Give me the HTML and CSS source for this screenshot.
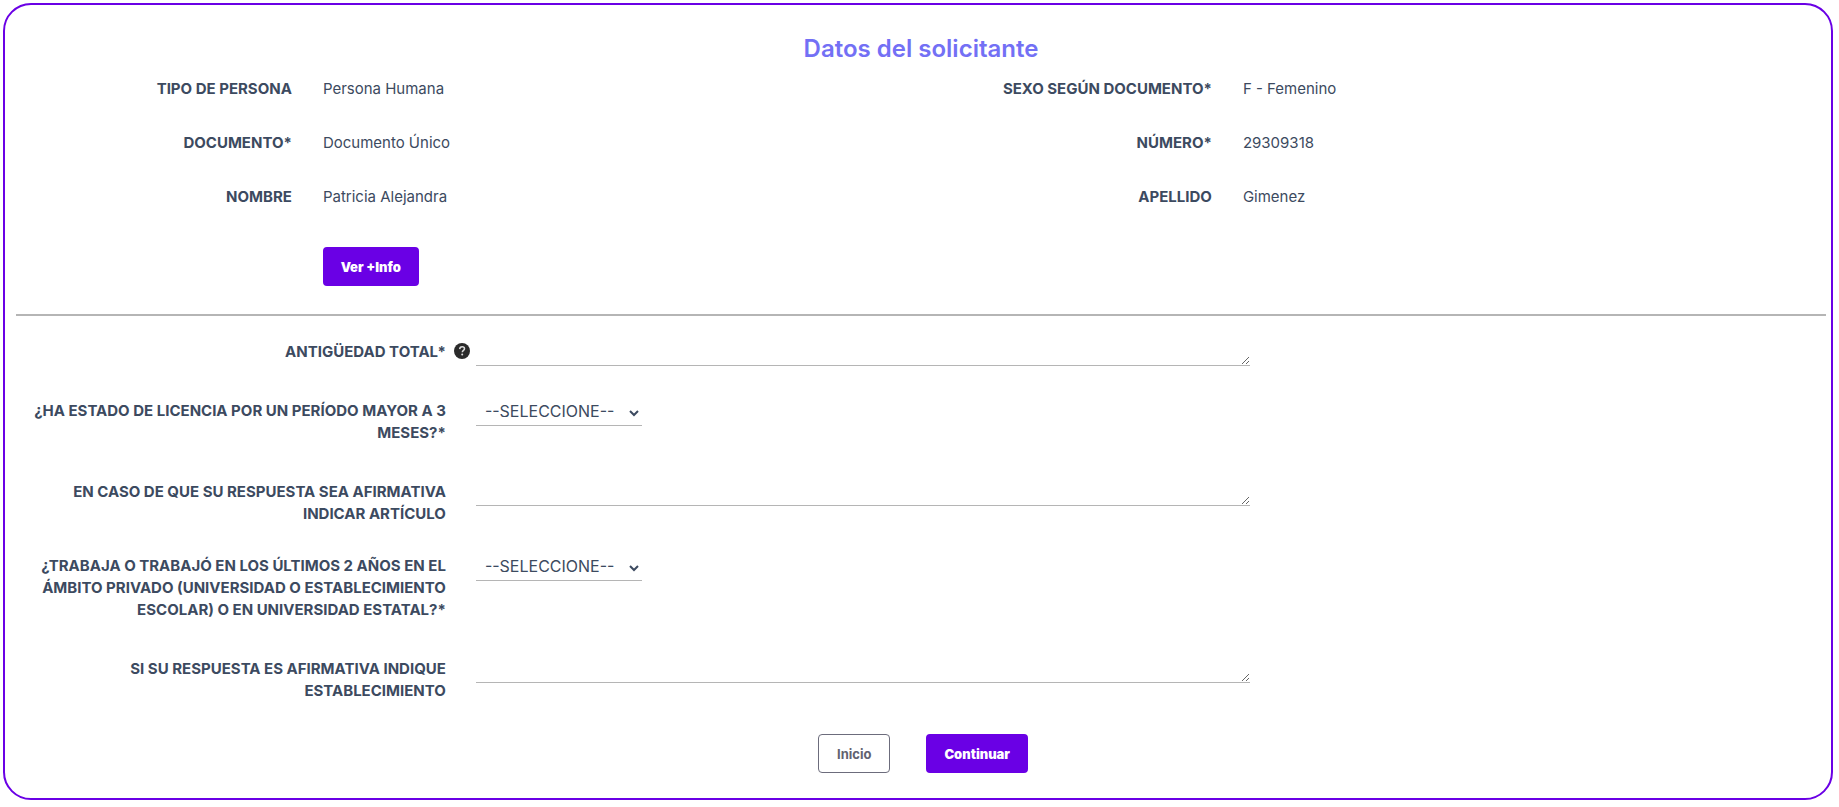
FILE: index.html
```html
<!DOCTYPE html>
<html lang="es">
<head>
    <meta charset="UTF-8">
    <meta name="viewport" content="width=device-width, initial-scale=1.0">
    <title>Datos del solicitante</title>
    <link rel="stylesheet" href="styles.css">
</head>
<body>

    <form class="card">
        <h1>Datos del solicitante</h1>

        <dl class="datos">
            <div class="dato">
                <dt>TIPO DE PERSONA</dt>
                <dd>Persona Humana</dd>
            </div>
            <div class="dato">
                <dt>SEXO SEGÚN DOCUMENTO*</dt>
                <dd>F - Femenino</dd>
            </div>
            <div class="dato">
                <dt>DOCUMENTO*</dt>
                <dd>Documento Único</dd>
            </div>
            <div class="dato">
                <dt>NÚMERO*</dt>
                <dd>29309318</dd>
            </div>
            <div class="dato">
                <dt>NOMBRE</dt>
                <dd>Patricia Alejandra</dd>
            </div>
            <div class="dato">
                <dt>APELLIDO</dt>
                <dd>Gimenez</dd>
            </div>
        </dl>
        <div class="mas-info">
            <button type="button" class="btn btn-primary">Ver +Info</button>
        </div>

        <hr>

        <div class="campo campo-corto">
            <label for="antiguedad">ANTIGÜEDAD TOTAL*</label>
            <span class="ayuda">
                <svg width="16" height="16" viewBox="0 0 16 16" role="img" aria-label="Ayuda">
                    <circle cx="8" cy="8" r="8" fill="#2b2b2b"/>
                    <path d="M5.7 6.1c.1-1.5 1-2.3 2.4-2.3s2.4.8 2.4 2c0 1.6-2.2 1.7-2.2 3.4" fill="none" stroke="#ddd" stroke-width="1.5"/>
                    <circle cx="8.2" cy="11.6" r="1" fill="#ddd"/>
                </svg>
            </span>
            <textarea id="antiguedad" rows="1"></textarea>
        </div>
        <div class="campo campo-select">
            <label for="licencia">¿HA ESTADO DE LICENCIA POR UN PERÍODO MAYOR A 3 MESES?*</label>
            <select id="licencia">
                <option>--SELECCIONE--</option>
                <option>SI</option>
                <option>NO</option>
            </select>
        </div>
        <div class="campo">
            <label for="articulo">EN CASO DE QUE SU RESPUESTA SEA AFIRMATIVA INDICAR ARTÍCULO</label>
            <textarea id="articulo" rows="1"></textarea>
        </div>
        <div class="campo campo-select">
            <label for="privado">¿TRABAJA O TRABAJÓ EN LOS ÚLTIMOS 2 AÑOS EN EL ÁMBITO PRIVADO (UNIVERSIDAD O ESTABLECIMIENTO ESCOLAR) O EN UNIVERSIDAD ESTATAL?*</label>
            <select id="privado">
                <option>--SELECCIONE--</option>
                <option>SI</option>
                <option>NO</option>
            </select>
        </div>
        <div class="campo">
            <label for="establecimiento">SI SU RESPUESTA ES AFIRMATIVA INDIQUE ESTABLECIMIENTO</label>
            <textarea id="establecimiento" rows="1"></textarea>
        </div>

        <div class="acciones">
            <button type="button" class="btn btn-outline">Inicio</button>
            <button type="submit" class="btn btn-primary">Continuar</button>
        </div>
    </form>

</body>
</html>
```
FILE: styles.css
```css
* {
    box-sizing: border-box;
}
body {
    font-family: Inter, "Open Sans", sans-serif;
    font-size: 15px;
    line-height: 22px;
    margin: 0;
    padding: 3px 6px 6px 3px;
    background-color: #fff;
    color: #3c4a60;
}
.card {
    padding: 28px 5px 25px 11px;
    border: 2px solid #6a00e5;
    border-radius: 28px;
}
h1 {
    margin: 0 0 13px;
    font-size: 24px;
    line-height: 32px;
    font-weight: 600;
    text-align: center;
    color: #7370f5;
}
.datos {
    display: grid;
    grid-template-columns: 1fr 1fr;
    gap: 32px 30px;
    margin: 0;
}
.dato {
    display: flex;
    gap: 31px;
}
dt {
    width: 31%;
    font-weight: 700;
    text-align: right;
}
dd {
    margin: 0;
}
.mas-info {
    margin: 39px 0 28px;
    padding-left: calc(17% - 1px);
}
hr {
    border: 0;
    height: 2px;
    margin: 0 0 25px;
    background: #b5b5b5;
}
.campo {
    display: flex;
    align-items: flex-start;
    gap: 30px;
    margin-bottom: 30px;
}
.campo label {
    width: 23.75%;
    font-weight: 700;
    text-align: right;
}
.campo-corto {
    position: relative;
    margin-bottom: 34px;
}
.campo-select {
    margin-bottom: 37px;
}
.ayuda {
    position: absolute;
    left: 23.75%;
    top: 2px;
    height: 16px;
    margin-left: 8px;
}
.ayuda svg {
    display: block;
}
textarea,
select {
    border: 0;
    border-bottom: 1px solid #b5b5b5;
    background: transparent;
    font: inherit;
    font-size: 16px;
    color: inherit;
}
textarea {
    width: 42.75%;
    height: 25px;
    padding: 0;
}
select {
    width: 166px;
    height: 26px;
    padding: 0 7px 8px 5px;
}
.acciones {
    display: flex;
    justify-content: center;
    gap: 36px;
    padding: 2px 0 0 4px;
}
.btn {
    height: 39px;
    padding: 0 16px;
    border: 2px solid #6a00e5;
    border-radius: 4px;
    font-family: inherit;
    font-size: 13px;
    font-weight: 900;
}
.btn-primary {
    background-color: #6a00e5;
    color: #fff;
}
.btn-outline {
    padding: 0 18px;
    border: 1px solid #6c6c7c;
    background-color: #fff;
    color: #62626f;
    font-weight: 700;
}
```
